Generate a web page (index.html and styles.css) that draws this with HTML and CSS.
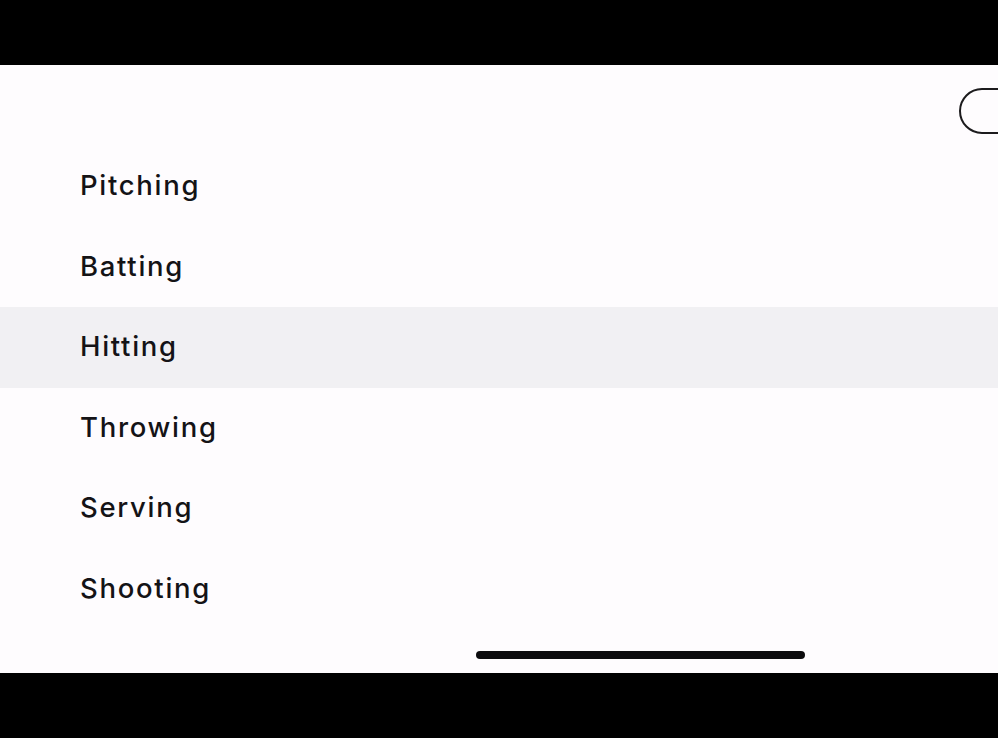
FILE: index.html
```html
<!DOCTYPE html>
<html>
<head>
<meta charset="utf-8">
<link rel="stylesheet" href="styles.css">
</head>
<body>
<div class="bar"></div>
<main class="screen">
  <header class="top">
    <button class="pill" aria-label="Done"></button>
  </header>
  <ul class="list">
    <li class="row">Pitching</li>
    <li class="row">Batting</li>
    <li class="row selected">Hitting</li>
    <li class="row">Throwing</li>
    <li class="row">Serving</li>
    <li class="row">Shooting</li>
  </ul>
  <div class="home"></div>
</main>
<div class="bar"></div>
</body>
</html>
```
FILE: styles.css
```css
html, body {
  margin: 0;
  padding: 0;
  background: #000;
  width: 998px;
  height: 738px;
  overflow: hidden;
}
.bar {
  height: 65px;
  background: #000;
}
.screen {
  position: relative;
  height: 608px;
  background: #fefcfe;
  overflow: hidden;
  display: flex;
  flex-direction: column;
}
.top {
  height: 81px;
  display: flex;
  justify-content: flex-end;
  align-items: flex-start;
}
.pill {
  margin-top: 23px;
  margin-right: -61px;
  width: 100px;
  height: 46px;
  border: 2px solid #1c1b1d;
  border-radius: 23px;
  background: transparent;
  padding: 0;
}
.list {
  list-style: none;
  margin: 0;
  padding: 0;
}
.row {
  height: 80.5px;
  display: flex;
  align-items: center;
  padding-left: 80px;
  padding-bottom: 2px;
  box-sizing: border-box;
  font-family: "Inter", sans-serif;
  font-size: 27.5px;
  font-weight: 500;
  color: #141316;
  letter-spacing: 1.7px;
}
.row.selected {
  background: #f1f0f3;
}
.home {
  position: absolute;
  left: 476px;
  top: 586px;
  width: 329px;
  height: 8px;
  border-radius: 4px;
  background: #0c0b0e;
}
```
